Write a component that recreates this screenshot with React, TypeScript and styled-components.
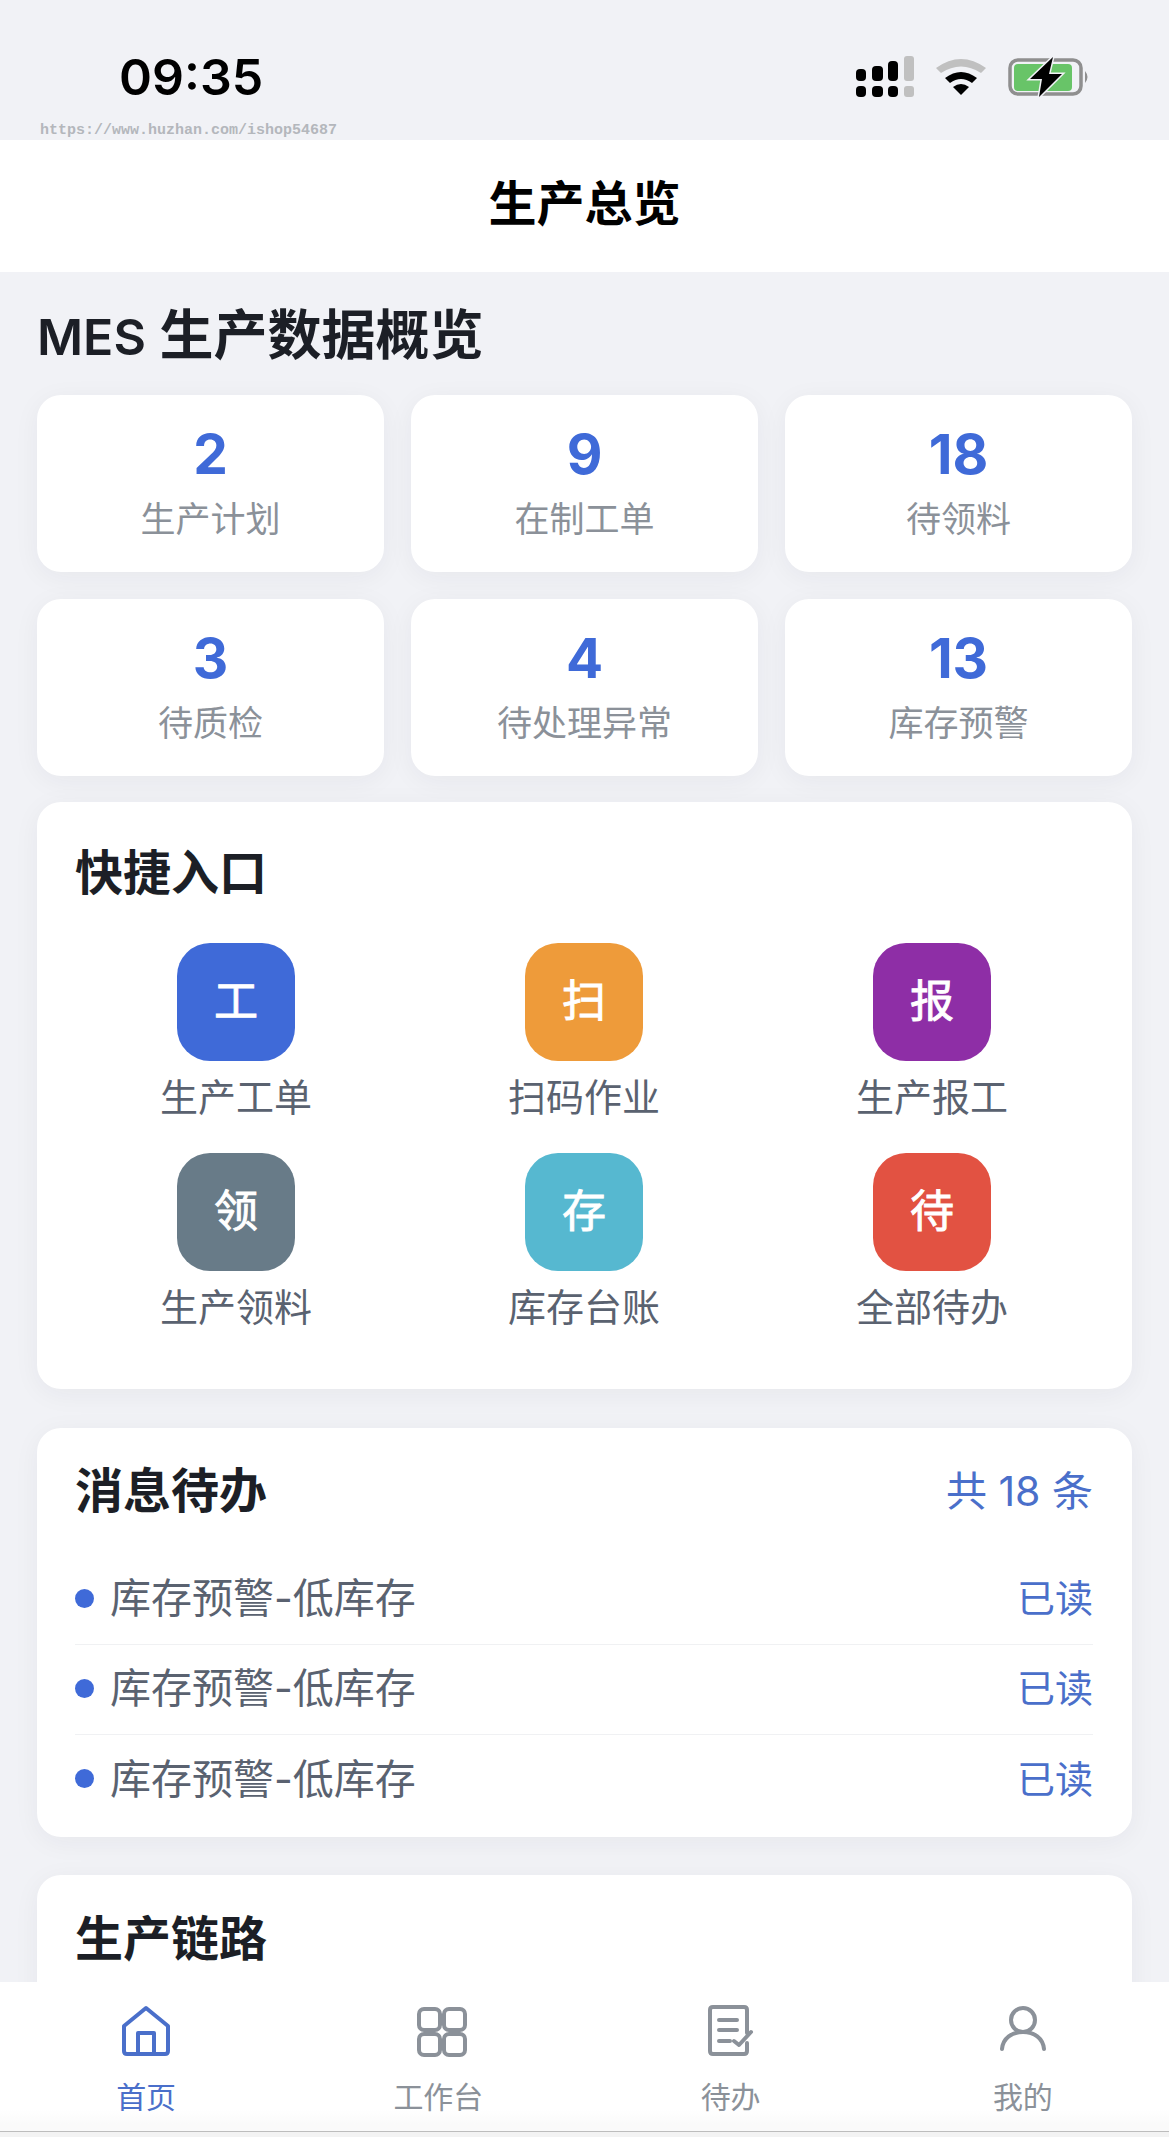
import { ReactNode } from 'react';
import styled, { createGlobalStyle } from 'styled-components';

const GlobalStyle = createGlobalStyle`
  html, body {
    margin: 0;
    padding: 0;
    background: #f1f2f6;
  }
  * {
    box-sizing: border-box;
  }
`;

const Phone = styled.div`
  position: relative;
  width: 1169px;
  height: 2137px;
  overflow: hidden;
  background: #f1f2f6;
  font-family: Inter, "Noto Sans CJK SC", sans-serif;
`;

const StatusBar = styled.div`
  position: relative;
  height: 140px;
  display: flex;
  justify-content: space-between;
  align-items: flex-start;
  padding: 50px 79px 0 119px;
`;

const Time = styled.div`
  font-size: 50px;
  line-height: 54px;
  font-weight: 600;
  color: #000;
`;

const StatusIcons = styled.div`
  display: flex;
  align-items: center;
  gap: 22px;
  padding-top: 6px;
`;

const Watermark = styled.div`
  position: absolute;
  left: 40px;
  top: 122px;
  font-family: "Liberation Mono", monospace;
  font-size: 15px;
  line-height: 18px;
  font-weight: 700;
  color: #b4b7bc;
`;

const Header = styled.div`
  height: 132px;
  display: flex;
  align-items: center;
  justify-content: center;
  padding-bottom: 12px;
  background: #fff;
  font-size: 48px;
  font-weight: 700;
  color: #000;
`;

const Content = styled.div`
  display: flex;
  flex-direction: column;
  padding: 30px 37px 0;
`;

const PageTitle = styled.h1`
  margin: 0 0 24px;
  font-size: 54px;
  line-height: 68px;
  font-weight: 600;
  color: #1c1f26;
`;

const LatinTitle = styled.span`
  font-size: 50px;
`;

const StatGrid = styled.div`
  display: grid;
  grid-template-columns: repeat(3, 1fr);
  gap: 27px;
  margin-bottom: 26px;
`;

const Card = styled.div`
  background: #fff;
  border-radius: 24px;
  box-shadow: 0 5px 27px rgba(30, 40, 60, 0.05);
`;

const StatCard = styled(Card)`
  height: 177px;
  display: flex;
  flex-direction: column;
  align-items: center;
  justify-content: center;
`;

const StatValue = styled.div`
  font-size: 55px;
  line-height: 62px;
  font-weight: 700;
  color: #3f6ad8;
`;

const StatLabel = styled.div`
  margin-top: 9px;
  font-size: 35px;
  line-height: 50px;
  color: #8b9199;
`;

const QuickCard = styled(Card)`
  height: 587px;
  padding: 38px 38px 0;
  margin-bottom: 39px;
`;

const CardTitle = styled.h2`
  margin: 0;
  font-size: 48px;
  line-height: 66px;
  font-weight: 600;
  color: #1c1f26;
`;

const QuickGrid = styled.div`
  display: grid;
  grid-template-columns: repeat(3, 1fr);
  row-gap: 0;
  margin: 37px -12px 0 -13px;
`;

const QuickItem = styled.div`
  height: 210px;
  display: flex;
  flex-direction: column;
  align-items: center;
`;

const QuickIcon = styled.div<{ $color: string }>`
  width: 118px;
  height: 118px;
  display: flex;
  align-items: center;
  justify-content: center;
  padding-bottom: 8px;
  border-radius: 33px;
  background: ${(p) => p.$color};
  color: #fff;
  font-size: 44px;
  -webkit-text-stroke: 0.9px #fff;
`;

const QuickLabel = styled.div`
  margin-top: 9px;
  font-size: 38px;
  line-height: 54px;
  color: #5a6270;
`;

const MessageCard = styled(Card)`
  height: 409px;
  padding: 30px 39px 0 38px;
  margin-bottom: 38px;
`;

const CardHead = styled.div`
  display: flex;
  justify-content: space-between;
  align-items: center;
  margin-bottom: 31px;
`;

const CountText = styled.div`
  font-size: 41px;
  line-height: 54px;
  color: #4a6fca;
`;

const ReadText = styled.div`
  font-size: 38px;
  line-height: 54px;
  color: #4a6fca;
`;

const MessageRow = styled.div`
  height: 90px;
  display: flex;
  align-items: center;
  justify-content: space-between;
  padding-bottom: 3px;
  border-bottom: 1px solid #f0f1f3;

  &:last-child {
    border-bottom: none;
  }
`;

const MessageLeft = styled.div`
  display: flex;
  align-items: center;
  gap: 16px;
`;

const Dot = styled.span`
  width: 19px;
  height: 19px;
  border-radius: 50%;
  background: #3f6ad8;
`;

const MessageText = styled.span`
  font-size: 41px;
  line-height: 54px;
  color: #5a6270;
`;

const ChainCard = styled(Card)`
  height: 300px;
  padding: 31px 38px 0;
`;

const TabBar = styled.div`
  position: absolute;
  left: 0;
  right: 0;
  top: 1982px;
  height: 155px;
  display: grid;
  grid-template-columns: repeat(4, 1fr);
  background: linear-gradient(#fff 85%, #fafafa 95%);
  border-bottom: 5px solid #f3f3f3;
  box-shadow: inset 0 -1px 0 #bdbdbd;
`;

const TabItem = styled.div<{ $active?: boolean }>`
  display: flex;
  flex-direction: column;
  align-items: center;
  padding-top: 23px;
  color: ${(p) => (p.$active ? '#4a6fca' : '#8b9199')};
`;

const TabIcon = styled.div`
  height: 52px;
  display: flex;
  align-items: center;
  justify-content: center;
`;

const TabLabel = styled.div`
  margin-top: 20px;
  font-size: 30px;
  line-height: 40px;
`;

function SignalIcon() {
  return (
    <svg width="58" height="41" viewBox="0 0 58 41">
      <g fill="#000">
        <rect x="0" y="30" width="10" height="11" rx="4" />
        <rect x="16" y="30" width="11" height="11" rx="4" />
        <rect x="32" y="30" width="10" height="11" rx="4" />
        <rect x="0" y="13" width="10" height="12" rx="4" />
        <rect x="16" y="10" width="11" height="15" rx="4" />
        <rect x="32" y="5" width="10" height="20" rx="4" />
      </g>
      <g fill="#c0c0c0">
        <rect x="48" y="30" width="10" height="11" rx="3" />
        <rect x="48" y="0" width="10" height="25" rx="3" />
      </g>
    </svg>
  );
}

function WifiIcon() {
  return (
    <svg width="50" height="37" viewBox="0 0 50 37">
      <path d="M0 10 Q25 -8 50 10 L45 15 Q25 2 5 15 Z" fill="#c0c0c0" />
      <path d="M9 20 Q25 8 41 20 L36 25 Q25 17 14 25 Z" fill="#000" />
      <path d="M17 29 Q25 23 33 29 L25 37 Z" fill="#000" />
    </svg>
  );
}

function BatteryIcon() {
  return (
    <svg width="82" height="40" viewBox="0 0 82 40">
      <rect x="2" y="3" width="71" height="34" rx="8" fill="none" stroke="#8f8f8f" strokeWidth="3.5" />
      <rect x="6" y="7" width="58" height="27" rx="4" fill="#68c468" />
      <path d="M77 14 Q82 20 77 26 Z" fill="#8f8f8f" />
      <path
        d="M45 0 L22 22 L34 22 L31 40 L54 17 L41 17 Z"
        fill="#000"
        stroke="#f1f2f6"
        strokeWidth="3"
        paintOrder="stroke"
      />
    </svg>
  );
}

function HomeIcon() {
  return (
    <svg width="50" height="52" viewBox="0 0 50 52" fill="none" stroke="currentColor" strokeWidth="4" strokeLinejoin="round">
      <path d="M25 3 L47 21 V46 Q47 49 44 49 H6 Q3 49 3 46 V21 Z" />
      <path d="M17 49 V28 H33 V49" />
    </svg>
  );
}

function GridIcon() {
  return (
    <svg width="58" height="52" viewBox="-8 -2 58 52" fill="none" stroke="currentColor" strokeWidth="4">
      <rect x="2" y="2" width="21" height="21" rx="5" />
      <rect x="27" y="2" width="21" height="21" rx="5" />
      <rect x="2" y="27" width="21" height="21" rx="5" />
      <rect x="27" y="27" width="21" height="21" rx="5" />
    </svg>
  );
}

function TodoIcon() {
  return (
    <svg width="46" height="52" viewBox="0 0 46 52" fill="none" stroke="currentColor" strokeWidth="4" strokeLinecap="round" strokeLinejoin="round">
      <path d="M39 38 V46 Q39 49 36 49 H5 Q2 49 2 46 V5 Q2 2 5 2 H36 Q39 2 39 5 V28" />
      <path d="M11 15 H29 M11 25 H29 M11 36 H22" />
      <path d="M26 36 L31 40 L43 27" />
    </svg>
  );
}

function UserIcon() {
  return (
    <svg width="46" height="52" viewBox="0 0 46 52" fill="none" stroke="currentColor" strokeWidth="4" strokeLinecap="round">
      <circle cx="23" cy="15" r="12" />
      <path d="M2 44 C3 33 12 27 23 27 C34 27 43 33 44 44" />
    </svg>
  );
}

const stats = [
  { value: '2', label: '生产计划' },
  { value: '9', label: '在制工单' },
  { value: '18', label: '待领料' },
  { value: '3', label: '待质检' },
  { value: '4', label: '待处理异常' },
  { value: '13', label: '库存预警' },
];

const quickItems = [
  { icon: '工', label: '生产工单', color: '#3f6ad8' },
  { icon: '扫', label: '扫码作业', color: '#ee9b3a' },
  { icon: '报', label: '生产报工', color: '#8e2ea6' },
  { icon: '领', label: '生产领料', color: '#687b88' },
  { icon: '存', label: '库存台账', color: '#56b8d0' },
  { icon: '待', label: '全部待办', color: '#e25242' },
];

const tabs: { label: string; icon: ReactNode; active?: boolean }[] = [
  { label: '首页', icon: <HomeIcon />, active: true },
  { label: '工作台', icon: <GridIcon /> },
  { label: '待办', icon: <TodoIcon /> },
  { label: '我的', icon: <UserIcon /> },
];

export default function App() {
  return (
    <Phone>
      <GlobalStyle />
      <StatusBar>
        <Time>09:35</Time>
        <StatusIcons>
          <SignalIcon />
          <WifiIcon />
          <BatteryIcon />
        </StatusIcons>
        <Watermark>https://www.huzhan.com/ishop54687</Watermark>
      </StatusBar>

      <Header>生产总览</Header>

      <Content>
        <PageTitle>
          <LatinTitle>MES</LatinTitle> 生产数据概览
        </PageTitle>

        <StatGrid>
          {stats.map((s) => (
            <StatCard key={s.label}>
              <StatValue>{s.value}</StatValue>
              <StatLabel>{s.label}</StatLabel>
            </StatCard>
          ))}
        </StatGrid>

        <QuickCard>
          <CardTitle>快捷入口</CardTitle>
          <QuickGrid>
            {quickItems.map((q) => (
              <QuickItem key={q.label}>
                <QuickIcon $color={q.color}>{q.icon}</QuickIcon>
                <QuickLabel>{q.label}</QuickLabel>
              </QuickItem>
            ))}
          </QuickGrid>
        </QuickCard>

        <MessageCard>
          <CardHead>
            <CardTitle>消息待办</CardTitle>
            <CountText>共 18 条</CountText>
          </CardHead>
          {[0, 1, 2].map((i) => (
            <MessageRow key={i}>
              <MessageLeft>
                <Dot />
                <MessageText>库存预警-低库存</MessageText>
              </MessageLeft>
              <ReadText>已读</ReadText>
            </MessageRow>
          ))}
        </MessageCard>

        <ChainCard>
          <CardTitle>生产链路</CardTitle>
        </ChainCard>
      </Content>

      <TabBar>
        {tabs.map((t) => (
          <TabItem key={t.label} $active={t.active}>
            <TabIcon>{t.icon}</TabIcon>
            <TabLabel>{t.label}</TabLabel>
          </TabItem>
        ))}
      </TabBar>
    </Phone>
  );
}
